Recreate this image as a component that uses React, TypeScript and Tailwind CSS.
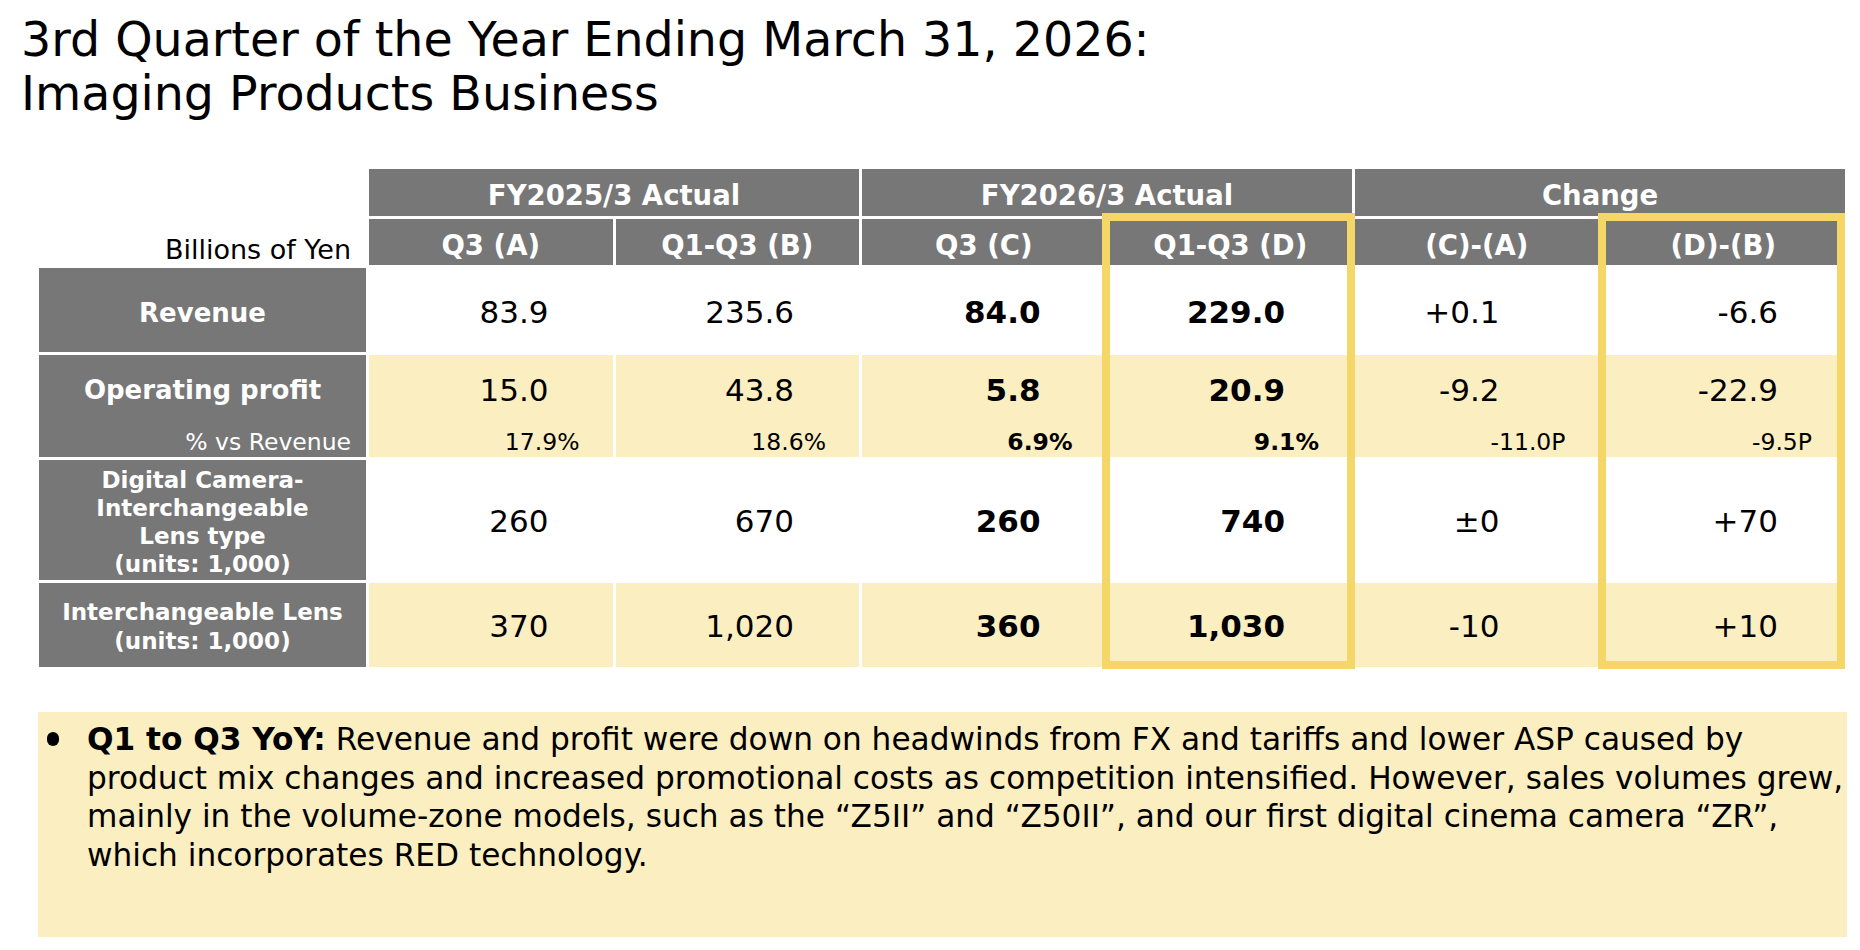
import React from "react";

interface Row {
  label: React.ReactNode;
  kind: "plain" | "profit" | "multi";
  shade: "white" | "yellow";
  values: string[];
  pcts?: string[];
  labelClass: string;
  nudge: string;
}

// per data column: right padding of the main number and of the % line, plus weight
const columns = [
  { pr: "pr-[64px]", ppr: "pr-[33px]", bold: false },
  { pr: "pr-[65px]", ppr: "pr-[33px]", bold: false },
  { pr: "pr-[65px]", ppr: "pr-[33px]", bold: true },
  { pr: "pr-[67px]", ppr: "pr-[33px]", bold: true },
  { pr: "pr-[99px]", ppr: "pr-[33px]", bold: false },
  { pr: "pr-[67px]", ppr: "pr-[33px]", bold: false },
];

const rows: Row[] = [
  {
    label: "Revenue",
    kind: "plain",
    shade: "white",
    values: ["83.9", "235.6", "84.0", "229.0", "+0.1", "-6.6"],
    labelClass: "text-[26px] leading-[32px]",
    nudge: "pt-[5px]",
  },
  {
    label: "Operating profit",
    kind: "profit",
    shade: "yellow",
    values: ["15.0", "43.8", "5.8", "20.9", "-9.2", "-22.9"],
    pcts: ["17.9%", "18.6%", "6.9%", "9.1%", "-11.0P", "-9.5P"],
    labelClass: "text-[26px] leading-[32px]",
    nudge: "",
  },
  {
    label: (
      <>
        Digital Camera-
        <br />
        Interchangeable
        <br />
        Lens type
        <br />
        (units: 1,000)
      </>
    ),
    kind: "multi",
    shade: "white",
    values: ["260", "670", "260", "740", "±0", "+70"],
    labelClass: "text-[23px] leading-[28px]",
    nudge: "pt-[3px]",
  },
  {
    label: (
      <>
        Interchangeable Lens
        <br />
        (units: 1,000)
      </>
    ),
    kind: "multi",
    shade: "yellow",
    values: ["370", "1,020", "360", "1,030", "-10", "+10"],
    labelClass: "text-[23px] leading-[29px]",
    nudge: "pt-[3px]",
  },
];

function HeaderCell({ children, span }: { children: React.ReactNode; span?: boolean }) {
  return (
    <div
      className={`flex items-center justify-center bg-[#777777] pt-[7px] text-[27.5px] font-bold text-white ${
        span ? "col-span-2" : ""
      }`}
    >
      {children}
    </div>
  );
}

function LabelCell({ row }: { row: Row }) {
  if (row.kind === "profit") {
    return (
      <div className="flex flex-col bg-[#777777] pt-[17px] text-white">
        <div className={`flex h-[36px] items-center justify-center font-bold ${row.labelClass}`}>{row.label}</div>
        <div className="mt-[21px] flex h-[28px] items-center justify-end pr-[15px] text-[23.5px]">% vs Revenue</div>
      </div>
    );
  }
  return (
    <div
      className={`flex items-center justify-center bg-[#777777] text-center font-bold text-white ${row.labelClass} ${row.nudge}`}
    >
      <div>{row.label}</div>
    </div>
  );
}

function ValueCell({ row, index }: { row: Row; index: number }) {
  const col = columns[index];
  const bg = row.shade === "yellow" ? "bg-[#FBEEC0]" : "bg-white";
  const weight = col.bold ? "font-bold" : "font-normal";
  if (row.kind === "profit") {
    return (
      <div className={`flex flex-col pt-[17px] text-black ${bg}`}>
        <div className={`flex h-[36px] items-center justify-end text-[31px] ${weight} ${col.pr}`}>{row.values[index]}</div>
        <div className={`mt-[21px] flex h-[28px] items-center justify-end text-[23.5px] ${weight} ${col.ppr}`}>
          {row.pcts?.[index]}
        </div>
      </div>
    );
  }
  return (
    <div className={`flex items-center justify-end text-[31px] text-black ${bg} ${weight} ${col.pr} ${row.nudge}`}>
      {row.values[index]}
    </div>
  );
}

export default function App() {
  return (
    <div className="h-[950px] w-[1860px] overflow-hidden bg-white font-['DejaVu_Sans',sans-serif] text-black">
      <h1 className="pl-[21px] pt-[13px] text-[47.5px] font-normal leading-[54px]">
        3rd Quarter of the Year Ending March 31, 2026:
        <br />
        Imaging Products Business
      </h1>

      <div className="relative ml-[39px] mt-[48px] w-[1806px]">
        <div className="grid grid-cols-[327px_repeat(6,243.5px)] grid-rows-[47px_46px_84px_102px_120px_84px] gap-[3px] bg-white">
          <div className="row-span-2 flex items-end justify-end bg-white pr-[15px] text-[27px] leading-[30px]">
            Billions of Yen
          </div>
          <HeaderCell span>FY2025/3 Actual</HeaderCell>
          <HeaderCell span>FY2026/3 Actual</HeaderCell>
          <HeaderCell span>Change</HeaderCell>
          <HeaderCell>Q3 (A)</HeaderCell>
          <HeaderCell>Q1-Q3 (B)</HeaderCell>
          <HeaderCell>Q3 (C)</HeaderCell>
          <HeaderCell>Q1-Q3 (D)</HeaderCell>
          <HeaderCell>(C)-(A)</HeaderCell>
          <HeaderCell>(D)-(B)</HeaderCell>

          {rows.map((row, r) => (
            <React.Fragment key={r}>
              <LabelCell row={row} />
              {row.values.map((_, i) => (
                <ValueCell key={i} row={row} index={i} />
              ))}
            </React.Fragment>
          ))}
        </div>

        {/* highlight frames over the cumulative columns */}
        <div className="pointer-events-none absolute left-[1063px] top-[44px] h-[456px] w-[253px] border-[8px] border-[#F5D668]" />
        <div className="pointer-events-none absolute left-[1559px] top-[44px] h-[456px] w-[247px] border-[8px] border-[#F5D668]" />
      </div>

      <div className="ml-[38px] mt-[45px] flex h-[225px] w-[1809px] items-start bg-[#FBEEC0] pl-[9px] pt-[8px]">
        <div className="mt-[12px] h-[14px] w-[12px] shrink-0 rounded-full bg-black" />
        <p className="ml-[28px] whitespace-nowrap text-[31.2px] leading-[38.5px]">
          <span className="font-bold">Q1 to Q3 YoY:</span> Revenue and profit were down on headwinds from FX and tariffs and
          lower ASP caused by
          <br />
          product mix changes and increased promotional costs as competition intensified. However, sales volumes grew,
          <br />
          mainly in the volume-zone models, such as the “Z5II” and “Z50II”, and our first digital cinema camera “ZR”,
          <br />
          which incorporates RED technology.
        </p>
      </div>
    </div>
  );
}
